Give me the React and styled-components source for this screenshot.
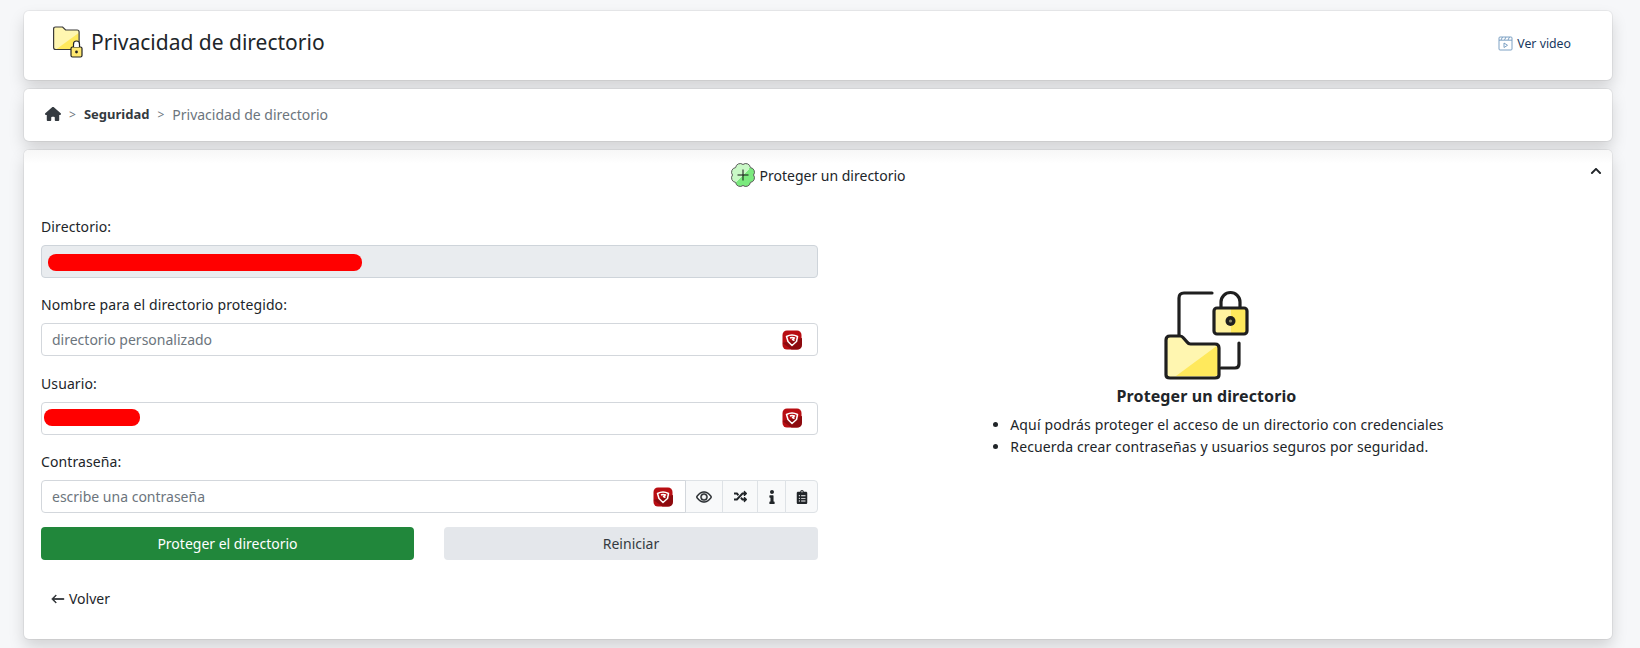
import styled, { createGlobalStyle } from "styled-components";
import { FaRandom, FaInfo, FaClipboardList, FaChevronUp } from "react-icons/fa";
import { FaHouse } from "react-icons/fa6";
import { BsArrowLeft, BsEye } from "react-icons/bs";

const GlobalStyle = createGlobalStyle`
  html, body {
    margin: 0;
    background: #f6f7f9;
    font-family: "Noto Sans", "Open Sans", sans-serif;
    color: #212529;
  }
  * { box-sizing: border-box; }
`;

const Page = styled.div`
  padding: 11px 28px 9px 24px;
  display: flex;
  flex-direction: column;
  gap: 9px;
`;

const Card = styled.div`
  background: #fff;
  border-radius: 5px;
  box-shadow: 0 0 0 1px rgba(0, 0, 0, 0.05), 0 8px 16px rgba(0, 0, 0, 0.15);
`;

const HeaderCard = styled(Card)`
  height: 69px;
  display: flex;
  align-items: center;
  justify-content: space-between;
  padding: 0 41px 0 28px;
`;

const TitleWrap = styled.div`
  display: flex;
  align-items: center;
  gap: 5px;
  margin-bottom: 7px;
`;

const Title = styled.h1`
  margin: 0;
  font-size: 21px;
  font-weight: 400;
  color: #212529;
`;

const VideoLink = styled.a`
  display: flex;
  align-items: center;
  gap: 4px;
  margin-bottom: 5px;
  font-size: 12.3px;
  color: #17375e;
`;

const CrumbCard = styled(Card)`
  height: 52px;
  display: flex;
  align-items: center;
  padding: 0 21px 2px;
  font-size: 14px;
  gap: 8px;
`;

const Sep = styled.span`
  color: #6c757d;
  font-size: 12px;
`;

const CrumbBold = styled.span`
  font-size: 13px;
  font-weight: 700;
  color: #343a40;
`;

const CrumbMuted = styled.span`
  color: #6c757d;
`;

const MainCard = styled(Card)`
  height: 489px;
  display: flex;
  flex-direction: column;
`;

const AccordionHead = styled.div`
  position: relative;
  height: 50px;
  display: flex;
  align-items: center;
  justify-content: center;
  gap: 5px;
  font-size: 14px;
  background: linear-gradient(#f7f7f7, #fff 14px);
  border-radius: 5px 5px 0 0;
`;

const Chevron = styled.span`
  position: absolute;
  right: 10px;
  top: 15px;
  font-size: 12px;
  line-height: 1;
`;

const Body = styled.div`
  display: grid;
  grid-template-columns: 777px 1fr;
  padding: 17px 17px 0;
`;

const FormCol = styled.div`
  display: flex;
  flex-direction: column;
`;

const Field = styled.div`
  display: flex;
  flex-direction: column;
  margin-bottom: 17.4px;
`;

const Label = styled.label`
  font-size: 14px;
  letter-spacing: 0.1px;
  line-height: 19px;
  margin-bottom: 9px;
`;

const InputBox = styled.div`
  position: relative;
  height: 33px;
  display: flex;
  align-items: center;
  flex: ${(p) => (p.$joined ? "1" : "none")};
  padding: 0 10px;
  border: 1px solid ${(p) => (p.$disabled ? "#ced4da" : "#d3d7dc")};
  border-radius: ${(p) => (p.$joined ? "4px 0 0 4px" : "4px")};
  background: ${(p) => (p.$disabled ? "#e9ecef" : "#fff")};
  font-size: 14px;
  color: #6c757d;
`;

const BraveWrap = styled.span`
  margin-left: auto;
  margin-right: ${(p) => p.$right}px;
  display: flex;
`;

const Redact = styled.span`
  position: absolute;
  top: ${(p) => p.$top}px;
  left: ${(p) => p.$left}px;
  width: ${(p) => p.$width}px;
  height: 17px;
  border-radius: 8px;
  background: #ff0000;
`;

const Group = styled.div`
  display: flex;
`;

const Addon = styled.div`
  width: ${(p) => p.$w}px;
  height: 33px;
  display: flex;
  align-items: center;
  justify-content: center;
  margin-left: -1px;
  border: 1px solid #dee2e6;
  background: #f8f9fa;
  font-size: 14px;
  color: #212529;
  &:last-child { border-radius: 0 4px 4px 0; }
`;

const Buttons = styled.div`
  display: grid;
  grid-template-columns: 373px 374px;
  gap: 30px;
  margin-top: -3.4px;
`;

const Button = styled.button`
  height: 33px;
  border: 0;
  border-radius: 4px;
  font: inherit;
  font-size: 14px;
  background: ${(p) => (p.$primary ? "#21873b" : "#e4e7eb")};
  color: ${(p) => (p.$primary ? "#fff" : "#343a40")};
`;

const Back = styled.a`
  display: flex;
  align-items: center;
  gap: 4px;
  margin: 29px 0 0 10px;
  font-size: 14px;
  color: #212529;
  svg { stroke: currentColor; stroke-width: 0.8; }
`;

const InfoCol = styled.div`
  display: flex;
  flex-direction: column;
  align-items: center;
  padding: 73px 0 0;
`;

const InfoTitle = styled.h3`
  margin: 3px 0 7px;
  font-size: 16px;
  font-weight: 700;
  letter-spacing: 0.1px;
`;

const InfoList = styled.ul`
  margin: 0;
  padding: 0 0 0 41px;
  font-size: 14px;
  letter-spacing: 0.13px;
  line-height: 22px;
`;

const EyeIcon = styled(BsEye)`
  stroke: currentColor;
  stroke-width: 0.5;
`;

const FolderLockSmall = () => (
  <svg width="34" height="34" viewBox="0 0 34 34">
    <path d="M1.6 4q0-2 2-2h7l3 3h11.5q2 0 2 2v15.5q0 2-2 2H3.6q-2 0-2-2z" fill="#fff6b0" />
    <path d="M4 24.5L26.6 8v14.5q0 2-2 2z" fill="#ffe95c" />
    <path d="M1.6 4q0-2 2-2h7l3 3h11.5q2 0 2 2v15.5q0 2-2 2H3.6q-2 0-2-2z" fill="none" stroke="#3a3a3a" strokeWidth="1.2" />
    <rect x="19" y="22" width="11" height="10" rx="1.5" fill="#ffe870" stroke="#222" strokeWidth="1.2" />
    <path d="M21.5 22v-3a3 3 0 0 1 6 0v3" fill="#fff" stroke="#222" strokeWidth="1.2" />
    <circle cx="24.5" cy="27" r="1.4" fill="#222" />
  </svg>
);

const ClapperIcon = () => (
  <svg width="15" height="15" viewBox="0 0 15 15" fill="none" stroke="#6f97bd" strokeWidth="0.9">
    <rect x="1" y="1" width="13" height="13" rx="1" />
    <path d="M1 4.2h13M3 4l1.5-3M6.5 4L8 1M10 4l1.5-3" />
    <path d="M6 7v4.5l3.5-2.2z" />
  </svg>
);

const BadgeIcon = () => (
  <svg width="24" height="24" viewBox="0 0 24 24">
    <defs>
      <linearGradient id="badgeFill" x1="0" y1="0" x2="1" y2="1">
        <stop offset="0.5" stopColor="#c9f8c6" />
        <stop offset="0.5" stopColor="#7bea7e" />
      </linearGradient>
    </defs>
    <path
      d="M12 1.5A4.6 4.6 0 0 1 19.4 4.6A4.6 4.6 0 0 1 22.5 12A4.6 4.6 0 0 1 19.4 19.4A4.6 4.6 0 0 1 12 22.5A4.6 4.6 0 0 1 4.6 19.4A4.6 4.6 0 0 1 1.5 12A4.6 4.6 0 0 1 4.6 4.6A4.6 4.6 0 0 1 12 1.5z"
      fill="url(#badgeFill)"
      stroke="#5a5a5a"
      strokeWidth="1"
    />
    <path d="M12 6.5v11M6.5 12h11" stroke="#111" strokeWidth="1" />
  </svg>
);

const BraveIcon = () => (
  <svg width="20" height="20" viewBox="0 0 20 20">
    <rect x="0.5" y="0.5" width="19" height="19" rx="4.5" fill="#b80d12" />
    <path d="M0.5 13l9 6.5h5.5q5 0 5-5V8z" fill="#8d0a0e" />
    <path
      d="M4.5 6.5Q10 3.5 15.5 6.5L14.5 11.5 10 15.5 6 11.5zM8 8Q10 7 12.5 8L10.5 9.5 12.5 10.5"
      fill="none"
      stroke="#fff"
      strokeWidth="1.5"
      strokeLinejoin="round"
    />
  </svg>
);

const FolderLockBig = () => (
  <svg width="94" height="92" viewBox="0 0 94 92" fill="none">
    <path d="M19 45V8q0-5 5-5h28M79 53v21q0 4-4 4H61" stroke="#1f1f1f" strokeWidth="3.2" strokeLinecap="round" />
    <path d="M6 50q0-4 4-4h10q2 0 3.5 2l3.5 4q1.5 2 3.5 2H55q4 0 4 4v27q0 3-4 3H10q-4 0-4-3z" fill="#fff6b0" />
    <path d="M16 86L58 55v28q0 3-3 3z" fill="#ffe95c" />
    <path d="M6 50q0-4 4-4h10q2 0 3.5 2l3.5 4q1.5 2 3.5 2H55q4 0 4 4v27q0 3-4 3H10q-4 0-4-3z" stroke="#1f1f1f" strokeWidth="3.2" />
    <rect x="54" y="18" width="33" height="26" rx="3" fill="#fff2a0" />
    <path d="M71 18h13q3 0 3 3v20q0 3-3 3H71z" fill="#ffe95c" />
    <rect x="54" y="18" width="33" height="26" rx="3" stroke="#1f1f1f" strokeWidth="3.2" />
    <path d="M61 18V12a9.500 9.500 0 0 1 19 0v6" stroke="#1f1f1f" strokeWidth="3.2" />
    <circle cx="70.5" cy="31" r="5" fill="#1f1f1f" />
    <circle cx="70.5" cy="31" r="1.600" fill="#8a8a6a" />
  </svg>
);

const App = () => {
  return (
    <Page>
      <GlobalStyle />
      <HeaderCard>
        <TitleWrap>
          <FolderLockSmall />
          <Title>Privacidad de directorio</Title>
        </TitleWrap>
        <VideoLink>
          <ClapperIcon />
          Ver video
        </VideoLink>
      </HeaderCard>

      <CrumbCard>
        <FaHouse size={16} color="#343a40" />
        <Sep>&gt;</Sep>
        <CrumbBold>Seguridad</CrumbBold>
        <Sep>&gt;</Sep>
        <CrumbMuted>Privacidad de directorio</CrumbMuted>
      </CrumbCard>

      <MainCard>
        <AccordionHead>
          <BadgeIcon />
          Proteger un directorio
          <Chevron>
            <FaChevronUp />
          </Chevron>
        </AccordionHead>
        <Body>
          <FormCol>
            <Field>
              <Label>Directorio:</Label>
              <InputBox $disabled>
                <Redact $top={8} $left={6} $width={314} />
              </InputBox>
            </Field>
            <Field>
              <Label>Nombre para el directorio protegido:</Label>
              <InputBox>
                directorio personalizado
                <BraveWrap $right={5}>
                  <BraveIcon />
                </BraveWrap>
              </InputBox>
            </Field>
            <Field>
              <Label>Usuario:</Label>
              <InputBox>
                <Redact $top={6} $left={2} $width={96} />
                <BraveWrap $right={5}>
                  <BraveIcon />
                </BraveWrap>
              </InputBox>
            </Field>
            <Field>
              <Label>Contraseña:</Label>
              <Group>
                <InputBox $joined>
                  escribe una contraseña
                  <BraveWrap $right={2}>
                    <BraveIcon />
                  </BraveWrap>
                </InputBox>
                <Addon $w={38}><EyeIcon size={16} /></Addon>
                <Addon $w={36}><FaRandom size={13} /></Addon>
                <Addon $w={29}><FaInfo size={14} /></Addon>
                <Addon $w={33}><FaClipboardList size={14} /></Addon>
              </Group>
            </Field>
            <Buttons>
              <Button $primary>Proteger el directorio</Button>
              <Button>Reiniciar</Button>
            </Buttons>
            <Back>
              <BsArrowLeft size={14} />
              Volver
            </Back>
          </FormCol>
          <InfoCol>
            <FolderLockBig />
            <InfoTitle>Proteger un directorio</InfoTitle>
            <InfoList>
              <li>Aquí podrás proteger el acceso de un directorio con credenciales</li>
              <li>Recuerda crear contraseñas y usuarios seguros por seguridad.</li>
            </InfoList>
          </InfoCol>
        </Body>
      </MainCard>
    </Page>
  );
};

export default App;
